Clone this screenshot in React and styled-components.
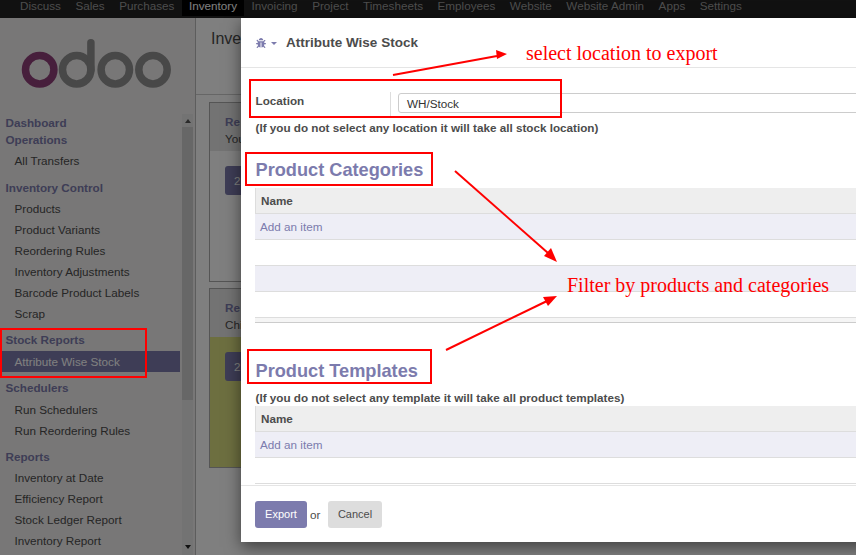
import styled, { createGlobalStyle } from "styled-components";
import { FaBug } from "react-icons/fa";

const apps = ["Discuss", "Sales", "Purchases", "Inventory", "Invoicing", "Project", "Timesheets", "Employees", "Website", "Website Admin", "Apps", "Settings"];

const menu = [
    { title: "Dashboard", headHeight: 17, after: 0 },
    { title: "Operations", headHeight: 17, headGap: 2, items: ["All Transfers"], after: 6 },
    { title: "Inventory Control", items: ["Products", "Product Variants", "Reordering Rules", "Inventory Adjustments", "Barcode Product Labels", "Scrap"] },
    { title: "Stock Reports", headGap: 1, items: ["Attribute Wise Stock"] },
    { title: "Schedulers", headGap: 1, items: ["Run Schedulers", "Run Reordering Rules"] },
    { title: "Reports", items: ["Inventory at Date", "Efficiency Report", "Stock Ledger Report", "Inventory Report"] },
];

export default function App(){
    return(
        <Page>
            <GlobalStyle/>
            <TopBar>
                {
                    apps.map((app) => {
                        return <AppLink key={app} $active={app === "Inventory"}>{app}</AppLink>
                    })
                }
            </TopBar>
            <Body>
                <Sidebar>
                    <LogoBox>
                        <Logo/>
                    </LogoBox>
                    <SideScroll>
                        <Menu>
                            {
                                menu.map((section) => {
                                    return <MenuSection key={section.title} section={section}/>
                                })
                            }
                        </Menu>
                        <ScrollBar>
                            <ArrowUp/>
                            <Thumb/>
                            <ArrowDown/>
                        </ScrollBar>
                    </SideScroll>
                </Sidebar>
                <Main>
                    <MainHeader>Inve</MainHeader>
                    <Cards>
                        <Card>
                            <CardHead>
                                <CardTitle>Re</CardTitle>
                                <CardText>You</CardText>
                            </CardHead>
                            <CardBody>
                                <CardButton>2</CardButton>
                            </CardBody>
                        </Card>
                        <Card>
                            <CardHead>
                                <CardTitle>Re</CardTitle>
                                <CardText>Chi</CardText>
                            </CardHead>
                            <CardBody $olive>
                                <CardButton>2</CardButton>
                            </CardBody>
                        </Card>
                    </Cards>
                </Main>
            </Body>
            <Backdrop/>
            <Modal>
                <ModalHeader>
                    <BugIcon/>
                    <Caret/>
                    <ModalTitle>Attribute Wise Stock</ModalTitle>
                </ModalHeader>
                <ModalBody>
                    <LocationRow>
                        <FieldLabel>Location</FieldLabel>
                        <FieldCell>
                            <Input>WH/Stock</Input>
                        </FieldCell>
                    </LocationRow>
                    <Note $top={4}>(If you do not select any location it will take all stock location)</Note>
                    <SectionTitle $top={24}>Product Categories</SectionTitle>
                    <ItemTable $top={7} $rows={4}/>
                    <TableEnd/>
                    <SectionTitle $top={37}>Product Templates</SectionTitle>
                    <Note $top={9}>(If you do not select any template it will take all product templates)</Note>
                    <ItemTable $top={1} $rows={2}/>
                </ModalBody>
                <ModalFooter>
                    <ExportButton>Export</ExportButton>
                    <Or>or</Or>
                    <CancelButton>Cancel</CancelButton>
                </ModalFooter>
            </Modal>
            <RedBox $x={0} $y={328} $w={147} $h={50}/>
            <RedBox $x={249} $y={79} $w={313} $h={39}/>
            <RedBox $x={245} $y={152} $w={188} $h={34}/>
            <RedBox $x={247} $y={349} $w={185} $h={35}/>
            <Note1>select location to export</Note1>
            <Note2>Filter by products and categories</Note2>
            <Arrows/>
        </Page>
    );
}

function MenuSection({ section }){
    const { title, items, headHeight, headGap, after } = section;
    return(
        <Section $after={after}>
            <SectionHead $height={headHeight} $gap={headGap}>{title}</SectionHead>
            {
                items && items.map((item) => {
                    return <MenuItem key={item} $active={item === "Attribute Wise Stock"}>{item}</MenuItem>
                })
            }
        </Section>
    );
}

function ItemTable({ $top, $rows }){
    const rows = Array.from({ length: $rows }, (_, i) => i);
    return(
        <TableWrap $top={$top}>
            <TableHead>Name</TableHead>
            {
                rows.map((i) => {
                    return <TableRow key={i} $odd={i % 2 === 0}>{i === 0 ? <AddItem>Add an item</AddItem> : null}</TableRow>
                })
            }
        </TableWrap>
    );
}

function Logo(){
    return(
        <svg width="152" height="52" viewBox="0 0 152 52">
            <g fill="none" strokeWidth="7.5">
                <circle cx="19.7" cy="33.7" r="14.2" stroke="#8f3f79"/>
                <circle cx="56.7" cy="33.7" r="14.2" stroke="#909090"/>
                <path d="M70.9 33.7V6.8" stroke="#909090" strokeLinecap="round"/>
                <circle cx="95.3" cy="33.7" r="14.2" stroke="#909090"/>
                <circle cx="133" cy="33.7" r="14.2" stroke="#909090"/>
            </g>
        </svg>
    );
}

function Arrows(){
    return(
        <ArrowLayer width="856" height="555" viewBox="0 0 856 555">
            <g stroke="#f00" strokeWidth="2" fill="none">
                <path d="M393 75L497 56"/>
                <path d="M455 171L548 253"/>
                <path d="M446 350L547 301"/>
            </g>
            <g fill="#f00">
                <path d="M507 54L496 50L497 59Z"/>
                <path d="M557 262L551 248L544 256Z"/>
                <path d="M557 296L543 297L548 306Z"/>
            </g>
        </ArrowLayer>
    );
}

const GlobalStyle = createGlobalStyle`
    html, body{
        margin: 0;
        padding: 0;
        background: #fff;
    }
    *{
        box-sizing: border-box;
    }
`;

const Page = styled.div`
    position: relative;
    width: 856px;
    height: 555px;
    overflow: hidden;
    display: flex;
    flex-direction: column;
    font-family: "Liberation Sans", Arial, sans-serif;
    font-size: 11.7px;
    color: #4c4c4c;
`;

const TopBar = styled.div`
    height: 18px;
    flex-shrink: 0;
    padding-left: 13px;
    background: #222;
    display: flex;
    align-items: flex-start;
`;

const AppLink = styled.div`
    height: 16px;
    padding: 0 7px;
    margin-right: 0.5px;
    line-height: 11px;
    background: ${(p) => (p.$active ? "#000" : "transparent")};
    color: ${(p) => (p.$active ? "#fff" : "#9a9a9a")};
`;

const Body = styled.div`
    flex: 1;
    display: flex;
    min-height: 0;
`;

const Sidebar = styled.div`
    width: 196px;
    flex-shrink: 0;
    border-right: 1px solid #bbb;
    background: #f0eeee;
    display: flex;
    flex-direction: column;
`;

const LogoBox = styled.div`
    height: 96px;
    padding: 18px 0 0 20px;
`;

const SideScroll = styled.div`
    flex: 1;
    display: flex;
    min-height: 0;
`;

const Menu = styled.div`
    width: 178px;
    margin-left: 2px;
    flex-shrink: 0;
    overflow: hidden;
`;

const Section = styled.div`
    margin-bottom: ${(p) => (p.$after === undefined ? 5 : p.$after)}px;
`;

const SectionHead = styled.div`
    height: ${(p) => p.$height || 21}px;
    margin-bottom: ${(p) => p.$gap || 0}px;
    padding-left: 3.5px;
    line-height: ${(p) => p.$height || 21}px;
    font-weight: 700;
    color: #7c7bad;
`;

const MenuItem = styled.div`
    height: 21px;
    padding-left: 12.5px;
    line-height: 21px;
    background: ${(p) => (p.$active ? "#7c7bad" : "transparent")};
    color: ${(p) => (p.$active ? "#fff" : "#4c4c4c")};
`;

const ScrollBar = styled.div`
    width: 11px;
    margin-left: 2px;
    display: flex;
    flex-direction: column;
    align-items: stretch;
    background: #e6e6e6;
`;

const ArrowUp = styled.div`
    width: 0;
    height: 0;
    margin: 5px auto 4px;
    border-left: 3.5px solid transparent;
    border-right: 3.5px solid transparent;
    border-bottom: 4px solid #555;
`;

const Thumb = styled.div`
    height: 273px;
    background: #cfcfcf;
`;

const ArrowDown = styled.div`
    width: 0;
    height: 0;
    margin: auto auto 6px;
    border-left: 3.5px solid transparent;
    border-right: 3.5px solid transparent;
    border-top: 4px solid #222;
`;

const Main = styled.div`
    flex: 1;
    background: #fff;
    min-width: 0;
`;

const MainHeader = styled.div`
    height: 77px;
    padding: 12px 0 0 15px;
    font-size: 16px;
    color: #4c4c4c;
    border-bottom: 1px solid #ccc;
`;

const Cards = styled.div`
    padding: 7px 0 0 13px;
    display: flex;
    flex-direction: column;
    gap: 6px;
`;

const Card = styled.div`
    width: 400px;
    height: 180px;
    border: 1px solid #aaa;
    display: flex;
    flex-direction: column;
    overflow: hidden;
`;

const CardHead = styled.div`
    height: 48px;
    padding: 10px 0 0 15px;
    background: #e6e6e6;
`;

const CardTitle = styled.div`
    font-weight: 700;
    color: #7c7bad;
    line-height: 17px;
`;

const CardText = styled.div`
    line-height: 17px;
`;

const CardBody = styled.div`
    flex: 1;
    padding: 15px 0 0 15px;
    background: ${(p) => (p.$olive ? "#dade80" : "#fff")};
`;

const CardButton = styled.div`
    width: 120px;
    height: 29px;
    border-radius: 3px;
    background: #7c7bad;
    color: #fff;
    line-height: 29px;
    padding-left: 9px;
`;

const Backdrop = styled.div`
    position: absolute;
    inset: 0;
    background: rgba(0, 0, 0, 0.5);
`;

const Modal = styled.div`
    position: absolute;
    left: 241px;
    top: 18px;
    width: 660px;
    height: 524px;
    background: #fff;
    box-shadow: 0 5px 15px rgba(0, 0, 0, 0.5);
    display: flex;
    flex-direction: column;
`;

const ModalHeader = styled.div`
    height: 50px;
    flex-shrink: 0;
    padding: 0 0 0 15px;
    border-bottom: 1px solid #e5e5e5;
    display: flex;
    align-items: center;
`;

const BugIcon = styled(FaBug)`
    width: 10px;
    height: 10px;
    color: #7c7bad;
`;

const Caret = styled.span`
    width: 0;
    height: 0;
    margin: 1px 0 0 5px;
    border-left: 3px solid transparent;
    border-right: 3px solid transparent;
    border-top: 3px solid #7c7bad;
`;

const ModalTitle = styled.div`
    margin-left: 9px;
    font-size: 13.5px;
    font-weight: 700;
    color: #4c4c4c;
`;

const ModalBody = styled.div`
    flex: 1;
    padding: 24px 0 0 14px;
    min-height: 0;
    overflow: hidden;
`;

const LocationRow = styled.div`
    height: 25px;
    display: flex;
`;

const FieldLabel = styled.div`
    width: 136px;
    padding: 2px 0 0 0.5px;
    font-weight: 700;
    color: #4c4c4c;
    border-right: 1px solid #ddd;
`;

const FieldCell = styled.div`
    flex: 1;
    padding: 1px 0 0 7px;
`;

const Input = styled.div`
    height: 20px;
    padding-left: 8px;
    border: 1px solid #ccc;
    border-radius: 3px;
    line-height: 20px;
    color: #333;
`;

const Note = styled.div`
    margin-top: ${(p) => p.$top}px;
    height: 14px;
    padding-left: 0.5px;
    line-height: 14px;
    font-weight: 700;
    color: #4c4c4c;
`;

const SectionTitle = styled.div`
    margin-top: ${(p) => p.$top}px;
    height: 22px;
    padding-left: 0.5px;
    line-height: 22px;
    font-size: 18.2px;
    font-weight: 700;
    color: #7c7bad;
`;

const TableWrap = styled.div`
    margin-top: ${(p) => p.$top}px;
`;

const TableHead = styled.div`
    height: 26px;
    padding-left: 5px;
    line-height: 25px;
    font-weight: 700;
    background: #eee;
    border-left: 1px solid #ddd;
    border-bottom: 1px solid #ddd;
`;

const TableRow = styled.div`
    height: 26px;
    padding-left: 5px;
    line-height: 25px;
    background: ${(p) => (p.$odd ? "#eeeef6" : "#fff")};
    border-bottom: 1px solid #ddd;
`;

const AddItem = styled.span`
    color: #7c7bad;
`;

const TableEnd = styled.div`
    height: 5px;
    background: #f5f5f5;
    border-bottom: 1px solid #ccc;
`;

const ModalFooter = styled.div`
    height: 57px;
    flex-shrink: 0;
    padding: 15px 0 0 14px;
    border-top: 1px solid #e5e5e5;
    display: flex;
    align-items: flex-start;
`;

const ExportButton = styled.div`
    width: 52px;
    height: 27px;
    border-radius: 3px;
    background: #7c7bad;
    color: #fff;
    font-size: 11px;
    line-height: 27px;
    text-align: center;
`;

const Or = styled.span`
    margin-left: 3px;
    width: 18px;
    line-height: 27px;
    color: #4c4c4c;
`;

const CancelButton = styled.div`
    width: 54px;
    height: 27px;
    border-radius: 3px;
    background: #ddd;
    color: #4c4c4c;
    font-size: 11px;
    line-height: 27px;
    text-align: center;
`;

const RedBox = styled.div`
    position: absolute;
    left: ${(p) => p.$x}px;
    top: ${(p) => p.$y}px;
    width: ${(p) => p.$w}px;
    height: ${(p) => p.$h}px;
    border: 2px solid #f00;
`;

const Note1 = styled.div`
    position: absolute;
    left: 526px;
    top: 42px;
    font-family: "Liberation Serif", "Times New Roman", serif;
    font-size: 20px;
    line-height: 23px;
    color: #f00;
    white-space: nowrap;
`;

const Note2 = styled.div`
    position: absolute;
    left: 567px;
    top: 274px;
    font-family: "Liberation Serif", "Times New Roman", serif;
    font-size: 20px;
    line-height: 23px;
    color: #f00;
    white-space: nowrap;
`;

const ArrowLayer = styled.svg`
    position: absolute;
    left: 0;
    top: 0;
    pointer-events: none;
`;
